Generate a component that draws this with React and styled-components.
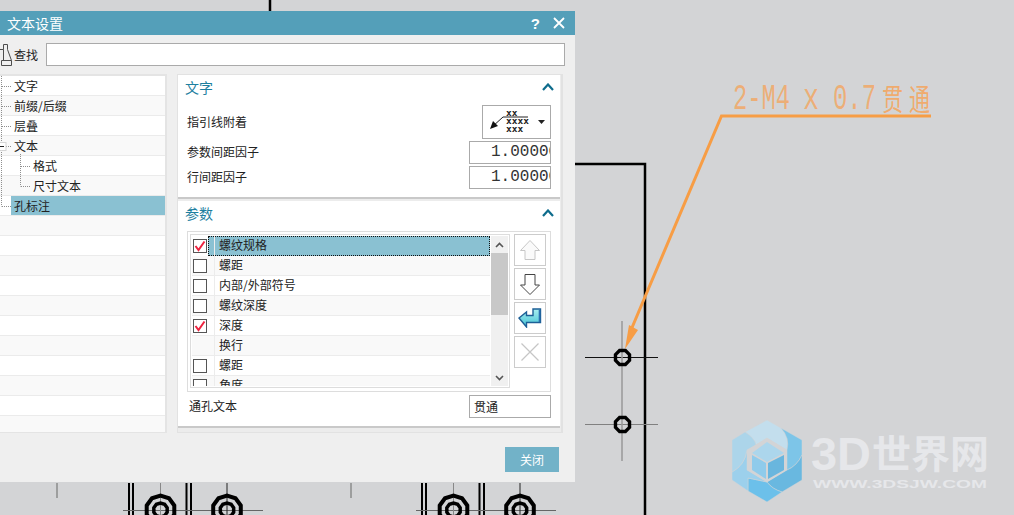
import styled, { createGlobalStyle } from "styled-components";

const CJK = `"Noto Sans CJK SC", "Noto Sans", sans-serif`;

const treeRows = [
  { label: "文字" },
  { label: "前缀/后缀" },
  { label: "层叠" },
  { label: "文本" },
  { label: "格式", child: true },
  { label: "尺寸文本", child: true },
  { label: "孔标注", selected: true },
  ...Array.from({ length: 11 }, () => ({ label: "" })),
];

const paramRows = [
  { label: "螺纹规格", check: true, selected: true },
  { label: "螺距", box: true },
  { label: "内部/外部符号", box: true },
  { label: "螺纹深度", box: true },
  { label: "深度", check: true },
  { label: "换行" },
  { label: "螺距", box: true },
  { label: "角度", box: true },
];

function Chevron() {
  return (
    <svg width="12" height="8" viewBox="0 0 12 8">
      <path d="M1 7 L6 1.5 L11 7" fill="none" stroke="#0e6c8c" strokeWidth="2.2" />
    </svg>
  );
}

function FindIcon() {
  return (
    <svg width="14" height="24" viewBox="0 0 14 24">
      <path
        d="M0 6.5 H3.5 M3.5 6.5 V1.5 H7.5 V6.5 M3.5 6.5 V17.5 M7.5 6.5 L11.5 17.5 M1.5 17.5 H11.5 V22.5 H1.5 Z"
        fill="none"
        stroke="#4d4d4d"
        strokeWidth="1"
      />
    </svg>
  );
}

function LeaderIcon() {
  return (
    <svg width="67" height="32" viewBox="0 0 67 32">
      <path d="M9 21 L20 11 H45" fill="none" stroke="#222" strokeWidth="1" />
      <path d="M7 23 L10 15 L15 20 Z" fill="#111" />
      <LeaderText x="23" y="9.7">xx</LeaderText>
      <LeaderText x="23" y="17.6">xxxx</LeaderText>
      <LeaderText x="23" y="25.7">xxx</LeaderText>
      <path d="M55 14 H62 L58.5 18 Z" fill="#222" />
    </svg>
  );
}

function UpIcon() {
  return (
    <svg width="20" height="20" viewBox="0 0 20 20">
      <path d="M10 0.5 L19.5 10.5 H15 V19.5 H5 V10.5 H0.5 Z" fill="#fafafa" stroke="#c6c6c6" />
    </svg>
  );
}

function DownIcon() {
  return (
    <svg width="20" height="21" viewBox="0 0 20 21">
      <path d="M5 0.5 H15 V11 H19.5 L10 20.5 L0.5 11 H5 Z" fill="#fff" stroke="#444" />
    </svg>
  );
}

function EnterIcon() {
  return (
    <svg width="24" height="20" viewBox="0 0 24 20">
      <defs>
        <linearGradient id="enterFill" x1="0" y1="0" x2="0" y2="1">
          <stop offset="0" stopColor="#a8eef0" />
          <stop offset="1" stopColor="#45c3d4" />
        </linearGradient>
      </defs>
      <path
        d="M1 10 L8.5 4 V7.5 H15 V1 H22.5 V14.5 H8.5 V19 Z"
        fill="url(#enterFill)"
        stroke="#1d5f96"
        strokeWidth="1.4"
      />
      <path d="M21.5 2 V14" stroke="#2b6fb0" strokeWidth="1.6" />
    </svg>
  );
}

function CrossIcon() {
  return (
    <svg width="18" height="18" viewBox="0 0 18 18">
      <path d="M0.5 0.5 L17.5 17.5 M17.5 0.5 L0.5 17.5" stroke="#c6c6c6" strokeWidth="1.2" />
    </svg>
  );
}

function Tick() {
  return (
    <svg width="14" height="14" viewBox="0 0 14 14">
      <path d="M2.5 7 L5.5 11 L11.5 2.5" fill="none" stroke="#ee2440" strokeWidth="2" />
    </svg>
  );
}

function Ring({ x, y, r, w, sides = 10 }) {
  const pts = Array.from({ length: sides }, (_, i) => {
    const a = (Math.PI * 2 * i) / sides + Math.PI / sides;
    return `${x + r * Math.cos(a)},${y + r * Math.sin(a)}`;
  }).join(" ");
  return <polygon points={pts} fill="none" stroke="#000" strokeWidth={w} />;
}

function BottomDetail({ x }) {
  return (
    <g>
      <path d={`M${x + 6} 483 V515 M${x + 10} 483 V515 M${x + 63.5} 483 V515 M${x + 68} 483 V515`} stroke="#000" strokeWidth="2" />
      <path d={`M${x} 510.5 H${x + 140}`} stroke="#666" strokeWidth="1" />
      <path d={`M${x + 37.5} 483 V515`} stroke="#888" strokeWidth="1" />
      <path d={`M${x + 104} 483 V515`} stroke="#222" strokeWidth="1" />
      <Ring x={x + 37.5} y={510} r={14.5} w={4} />
      <Ring x={x + 37.5} y={510} r={7} w={3.5} />
      <Ring x={x + 104} y={510} r={14.5} w={4} />
      <Ring x={x + 104} y={510} r={7} w={3.5} />
    </g>
  );
}

function Drawing() {
  return (
    <Canvas viewBox="0 0 1014 515">
      <path d="M270 0 V12" stroke="#000" strokeWidth="2.5" />
      <path d="M575 164 H645 V515" fill="none" stroke="#000" strokeWidth="2.5" />

      <path d="M585 357.5 H658" stroke="#111" strokeWidth="1" />
      <path d="M585 424.5 H658" stroke="#808080" strokeWidth="1" />
      <path d="M622 321 V461" stroke="#999" strokeWidth="1.5" />
      <Ring x={622.5} y={357.5} r={7.6} w={3.4} sides={8} />
      <Ring x={622.5} y={424.5} r={7.6} w={3.4} sides={8} />

      <path d="M931 116 H721.5 L631 330" fill="none" stroke="#f79d45" strokeWidth="3" />
      <path d="M625 349 L629 325 L638 330 Z" fill="#f79d45" />
      <DimText x="733" textLength="57" lengthAdjust="spacingAndGlyphs">2-M4</DimText>
      <DimText x="803" textLength="16" lengthAdjust="spacingAndGlyphs">x</DimText>
      <DimText x="833" textLength="43" lengthAdjust="spacingAndGlyphs">0.7</DimText>
      <DimCjk x="882" textLength="21" lengthAdjust="spacingAndGlyphs">贯</DimCjk>
      <DimCjk x="909" textLength="21" lengthAdjust="spacingAndGlyphs">通</DimCjk>

      <path d="M57 483 V498 M351 483 V498" stroke="#8c8c8c" strokeWidth="1.5" />
      <BottomDetail x={123} />
      <BottomDetail x={416} />

      <g stroke="#d3d4d6" strokeWidth="0.5">
        <path d="M745 432 L767 420 L781 428 Q790 438 787 450 L767 438 L756 445 Q752 436 745 432 Z" fill="#c3deed" />
        <path d="M781 428 L802 440 V455 Q797 466 787 470 V450 Q790 438 781 428 Z" fill="#7dc5e8" />
        <path d="M802 455 V480 L782 492 Q772 489 767 482 L787 470 Q797 466 802 455 Z" fill="#69b8e0" />
        <path d="M748 478 L767 482 Q772 489 782 492 L767 502 L748 491 Z" fill="#6cc0ea" />
        <path d="M747 450 V470 L767 482 L748 478 V491 L732 480 V472 Q745 465 747 450 Z" fill="#9cd0ec" />
        <path d="M732 440 L745 432 Q755 438 756 445 L747 450 Q745 465 732 472 Z" fill="#acd5ea" />
      </g>
      <path d="M767 438 L787 450 V470 L767 482 L747 470 V450 Z" fill="#d3d4d6" />
      <path d="M767 442 L784 453 L767 462 L752 453 Z" fill="#acd6ec" />
      <path d="M752 455 L766 463 V479 L752 470 Z" fill="#8fcbeb" />
      <path d="M784 455 V470 L768 479 V463 Z" fill="#69b6de" />

      <MarkLatin x="811" y="470" textLength="60" lengthAdjust="spacingAndGlyphs">3D</MarkLatin>
      <MarkCjk x="872" y="468" textLength="117" lengthAdjust="spacingAndGlyphs">世界网</MarkCjk>
      <MarkUrl x="813" y="488" textLength="174" lengthAdjust="spacingAndGlyphs">WWW.3DSJW.COM</MarkUrl>
    </Canvas>
  );
}

export default function App() {
  return (
    <Page>
      <GlobalStyle />
      <Drawing />
      <Dialog>
        <TitleBar>
          <TitleText>文本设置</TitleText>
          <TitleActions>
            <Help>?</Help>
            <svg width="12" height="12" viewBox="0 0 12 12">
              <path d="M1 1 L11 11 M11 1 L1 11" stroke="#fff" strokeWidth="1.8" />
            </svg>
          </TitleActions>
        </TitleBar>

        <SearchRow>
          <FindIcon />
          <SearchLabel>查找</SearchLabel>
          <SearchInput />
        </SearchRow>

        <Body>
          <Tree>
            <TreeLines width="60" height="140" viewBox="0 0 60 140">
              <path
                d="M1.5 0 V130.5 M2 10.5 H11 M2 30.5 H11 M2 50.5 H11 M2 70.5 H11 M2 130.5 H11 M20.5 78 V110.5 M21 90.5 H30 M21 110.5 H30"
                stroke="#8f8f8f"
                strokeDasharray="1 1"
                fill="none"
              />
              <rect x="-4" y="66.5" width="10" height="8" fill="#fff" stroke="#d5d5d5" />
              <path d="M0 70.5 H4" stroke="#222" />
            </TreeLines>
            {treeRows.map((row, i) => (
              <TreeRow key={i} $odd={i % 2 === 1} $child={row.child}>
                <TreeLabel $selected={row.selected}>{row.label}</TreeLabel>
              </TreeRow>
            ))}
          </Tree>

          <Panels>
            <Section>
              <SectionHead>
                <SectionTitle>文字</SectionTitle>
                <Chevron />
              </SectionHead>
              <FieldRow $height={34} $top={0}>
                <FieldLabel>指引线附着</FieldLabel>
                <LeaderSelect>
                  <LeaderIcon />
                </LeaderSelect>
              </FieldRow>
              <FieldRow $height={23} $top={2}>
                <FieldLabel>参数间距因子</FieldLabel>
                <NumberBox>1.00000</NumberBox>
              </FieldRow>
              <FieldRow $height={23} $top={2}>
                <FieldLabel>行间距因子</FieldLabel>
                <NumberBox>1.00000</NumberBox>
              </FieldRow>
            </Section>

            <Section>
              <SectionHead>
                <SectionTitle>参数</SectionTitle>
                <Chevron />
              </SectionHead>
              <ListGroup>
                <ListBox>
                  <ListRows>
                    {paramRows.map((row, i) => (
                      <ListRow key={i} $odd={i % 2 === 1} $selected={row.selected}>
                        <CheckCell>
                          {(row.box || row.check) && <CheckBox>{row.check && <Tick />}</CheckBox>}
                        </CheckCell>
                        <ListText>{row.label}</ListText>
                      </ListRow>
                    ))}
                  </ListRows>
                  <ScrollBar>
                    <ScrollArrow>
                      <svg width="9" height="6" viewBox="0 0 9 6">
                        <path d="M1 5 L4.5 1.5 L8 5" fill="none" stroke="#555" strokeWidth="1.6" />
                      </svg>
                    </ScrollArrow>
                    <ScrollThumb />
                    <ScrollTrack />
                    <ScrollArrow>
                      <svg width="9" height="6" viewBox="0 0 9 6">
                        <path d="M1 1 L4.5 4.5 L8 1" fill="none" stroke="#555" strokeWidth="1.6" />
                      </svg>
                    </ScrollArrow>
                  </ScrollBar>
                </ListBox>
                <ToolColumn>
                  <ToolButton><UpIcon /></ToolButton>
                  <ToolButton><DownIcon /></ToolButton>
                  <ToolButton><EnterIcon /></ToolButton>
                  <ToolButton><CrossIcon /></ToolButton>
                </ToolColumn>
              </ListGroup>
              <FieldRow $height={23} $top={3}>
                <FieldLabel $indent={2}>通孔文本</FieldLabel>
                <TextBox>贯通</TextBox>
              </FieldRow>
            </Section>
          </Panels>
        </Body>

        <Footer>
          <CloseButton>关闭</CloseButton>
        </Footer>
      </Dialog>
    </Page>
  );
}

const GlobalStyle = createGlobalStyle`
  html, body {
    margin: 0;
    padding: 0;
    background: #d3d4d6;
    overflow: hidden;
  }
`;

const Page = styled.div`
  position: relative;
  width: 1014px;
  height: 515px;
  overflow: hidden;
  background: #d3d4d6;
  font-family: ${CJK};
  font-size: 12px;
  color: #222;
`;

const Canvas = styled.svg`
  position: absolute;
  inset: 0;
  width: 1014px;
  height: 515px;
`;

const DimText = styled.text.attrs({ y: 109 })`
  font-family: "Liberation Mono", monospace;
  font-size: 36px;
  fill: #f7a052;
  fill-opacity: 0.72;
`;

const DimCjk = styled.text.attrs({ y: 110 })`
  font-family: ${CJK};
  font-size: 30px;
  fill: #f7a052;
  fill-opacity: 0.8;
`;

const MarkLatin = styled.text`
  font-family: "Liberation Sans", sans-serif;
  font-size: 46px;
  font-weight: 700;
  fill: #e6e7ea;
`;

const MarkCjk = styled.text`
  font-family: ${CJK};
  font-size: 39px;
  font-weight: 700;
  fill: #e6e7ea;
`;

const MarkUrl = styled.text`
  font-family: "Liberation Sans", sans-serif;
  font-size: 11.5px;
  font-weight: 700;
  fill: #e6e7ea;
`;

const LeaderText = styled.text`
  font-family: "DejaVu Sans Mono", monospace;
  font-size: 9.5px;
  font-weight: 700;
  fill: #222;
`;

const Dialog = styled.div`
  position: absolute;
  top: 11px;
  left: 0;
  width: 575px;
  height: 471px;
  display: flex;
  flex-direction: column;
  background: #efefef;
`;

const TitleBar = styled.div`
  height: 24px;
  flex: none;
  display: flex;
  align-items: center;
  justify-content: space-between;
  padding: 0 10px 0 7px;
  background: #549fb9;
  color: #fff;
`;

const TitleText = styled.span`
  font-size: 14px;
  line-height: 24px;
`;

const TitleActions = styled.div`
  display: flex;
  align-items: center;
  gap: 13px;
`;

const Help = styled.span`
  font-family: "Liberation Sans", sans-serif;
  font-size: 15px;
  font-weight: 700;
`;

const SearchRow = styled.div`
  height: 39px;
  flex: none;
  display: flex;
  align-items: center;
  padding-right: 10px;
`;

const SearchLabel = styled.span`
  margin: 0 8px 0 0;
  width: 24px;
  flex: none;
`;

const SearchInput = styled.div`
  flex: 1;
  height: 23px;
  box-sizing: border-box;
  background: #fff;
  border: 1px solid #aaaaaa;
`;

const Body = styled.div`
  height: 359px;
  flex: none;
  display: flex;
  gap: 10px;
`;

const Tree = styled.div`
  position: relative;
  width: 167px;
  flex: none;
  box-sizing: border-box;
  overflow: hidden;
  background: #f9f9f9;
  border-top: 2px solid #e4e4e4;
  border-right: 2px solid #e4e4e4;
  border-bottom: 1px solid #e4e4e4;
`;

const TreeLines = styled.svg`
  position: absolute;
  top: 0;
  left: 0;
`;

const TreeRow = styled.div`
  height: 20px;
  box-sizing: border-box;
  display: flex;
  padding-left: ${(p) => (p.$child ? "30px" : "11px")};
  background: ${(p) => (p.$odd ? "#f9f9f9" : "#ffffff")};
  border-bottom: 1px solid #ebebeb;
`;

const TreeLabel = styled.span`
  flex: 1;
  padding-left: 3px;
  line-height: 19px;
  background: ${(p) => (p.$selected ? "#8ac1d2" : "transparent")};
`;

const Panels = styled.div`
  width: 386px;
  flex: none;
  box-sizing: border-box;
  display: flex;
  flex-direction: column;
  gap: 4px;
  padding-right: 1px;
  background: #ececec;
  border: 1px solid #e2e2e2;
  border-right-width: 2px;
`;

const Section = styled.section`
  display: flex;
  flex-direction: column;
  padding: 0 9px 8px;
  background: #fff;
  box-shadow: 0 2px 0 #c9c9c9;
`;

const SectionHead = styled.div`
  height: 30px;
  flex: none;
  box-sizing: border-box;
  display: flex;
  align-items: center;
  justify-content: space-between;
  margin: 0 -3px 0 -2px;
  padding-bottom: 6px;
`;

const SectionTitle = styled.span`
  font-size: 14px;
  color: #1e7f9f;
`;

const FieldRow = styled.div`
  height: ${(p) => p.$height}px;
  flex: none;
  display: flex;
  align-items: center;
  justify-content: space-between;
  margin-top: ${(p) => p.$top}px;
`;

const FieldLabel = styled.span`
  padding: 0 0 2px ${(p) => p.$indent || 0}px;
`;

const LeaderSelect = styled.div`
  width: 69px;
  height: 34px;
  box-sizing: border-box;
  display: flex;
  align-items: center;
  justify-content: center;
  background: #fff;
  border: 1px solid #aaaaaa;
`;

const NumberBox = styled.div`
  width: 82px;
  height: 23px;
  box-sizing: border-box;
  overflow: hidden;
  padding-left: 21px;
  white-space: nowrap;
  font-family: "Liberation Mono", monospace;
  font-size: 16px;
  line-height: 21px;
  color: #333;
  background: #fff;
  border: 1px solid #aaaaaa;
`;

const TextBox = styled.div`
  width: 82px;
  height: 23px;
  box-sizing: border-box;
  padding-left: 4px;
  line-height: 21px;
  background: #fff;
  border: 1px solid #aaaaaa;
`;

const ListGroup = styled.div`
  height: 161px;
  flex: none;
  box-sizing: border-box;
  display: flex;
  gap: 4px;
  padding: 2px;
  border: 1px solid #dddddd;
`;

const ListBox = styled.div`
  width: 320px;
  height: 154px;
  box-sizing: border-box;
  display: flex;
  overflow: hidden;
  padding: 1px;
  border: 1px solid #dddddd;
`;

const ListRows = styled.div`
  width: 298px;
  height: 150px;
  flex: none;
  overflow: hidden;
`;

const ListRow = styled.div`
  height: 20px;
  box-sizing: border-box;
  display: flex;
  align-items: stretch;
  position: relative;
  background: ${(p) => (p.$odd ? "#f9f9f9" : "#ffffff")};
  border-bottom: 1px solid #ececec;
  ${(p) =>
    p.$selected &&
    `
    background: linear-gradient(90deg, transparent 16px, #8ac1d2 16px);
    border-bottom: 0;
    &::after {
      content: "";
      position: absolute;
      top: 0;
      bottom: 0;
      left: 16px;
      right: 0;
      border: 1px dotted #111;
    }
  `}
`;

const CheckCell = styled.div`
  width: 23px;
  flex: none;
  box-sizing: border-box;
  display: flex;
  align-items: center;
  padding-left: 1px;
  border-right: 1px solid #ececec;
`;

const CheckBox = styled.div`
  width: 14px;
  height: 14px;
  box-sizing: border-box;
  display: flex;
  align-items: center;
  justify-content: center;
  background: #fff;
  border: 1px solid #555;
  svg {
    flex: none;
  }
`;

const ListText = styled.span`
  position: relative;
  z-index: 1;
  padding-left: 4px;
  line-height: 18px;
`;

const ScrollBar = styled.div`
  width: 17px;
  margin-left: 1px;
  flex: none;
  display: flex;
  flex-direction: column;
  background: #f0f0f0;
`;

const ScrollArrow = styled.div`
  height: 17px;
  flex: none;
  display: flex;
  align-items: center;
  justify-content: center;
`;

const ScrollThumb = styled.div`
  height: 62px;
  flex: none;
  background: #c8c8c8;
`;

const ScrollTrack = styled.div`
  flex: 1;
`;

const ToolColumn = styled.div`
  display: flex;
  flex-direction: column;
  gap: 2px;
`;

const ToolButton = styled.div`
  width: 32px;
  height: 32px;
  box-sizing: border-box;
  display: flex;
  align-items: center;
  justify-content: center;
  background: #fff;
  border: 1px solid #cccccc;
`;

const Footer = styled.div`
  flex: 1;
  display: flex;
  align-items: flex-start;
  justify-content: flex-end;
  padding: 14px 16px 0 0;
`;

const CloseButton = styled.div`
  width: 54px;
  height: 25px;
  text-align: center;
  line-height: 25px;
  color: #fff;
  background: #72b2c8;
`;
